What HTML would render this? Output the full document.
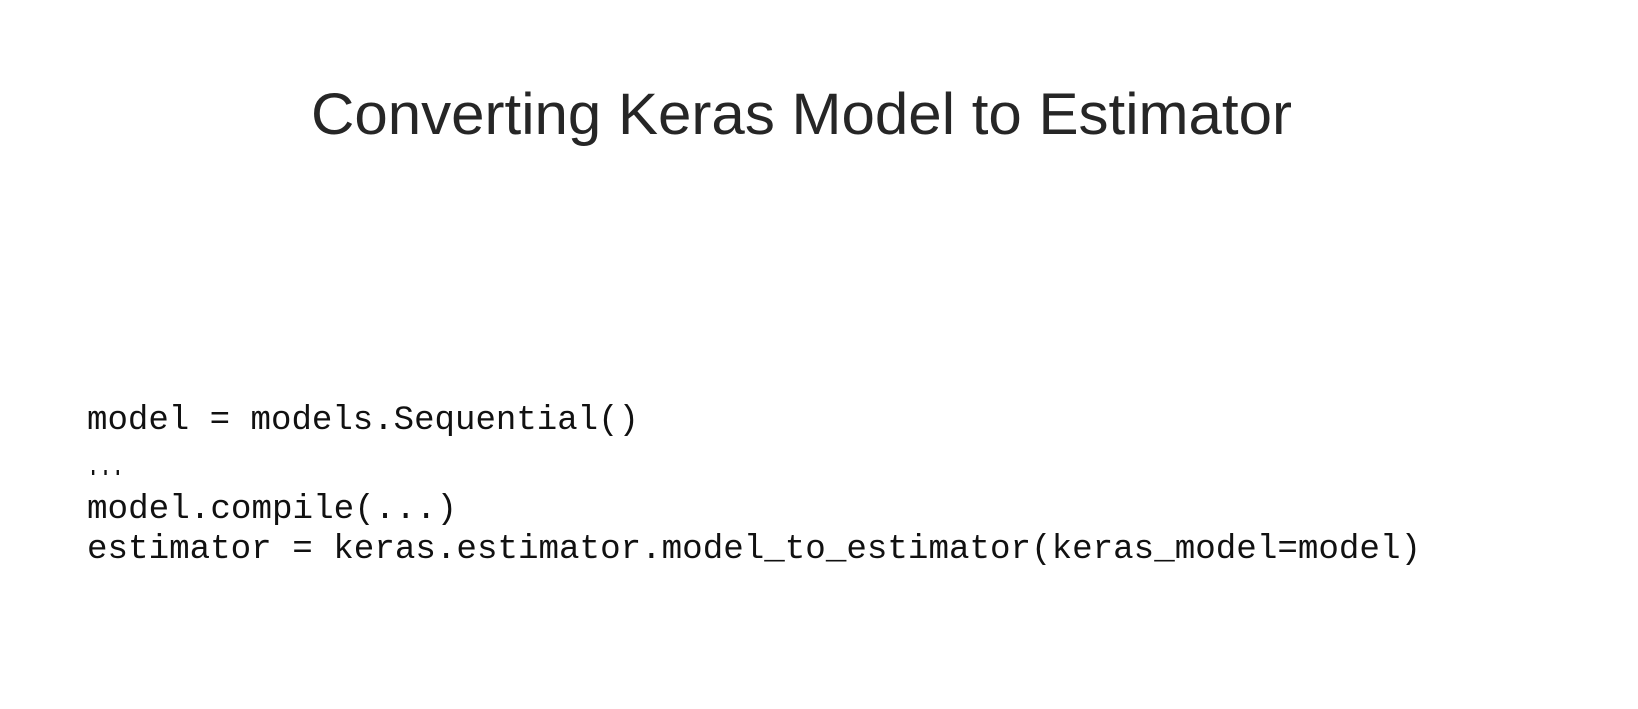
<!DOCTYPE html>
<html><head><meta charset="utf-8"><style>
html,body{margin:0;padding:0;background:#fff;width:1638px;height:709px;overflow:hidden}
svg{display:block}
</style></head><body>
<svg width="1638" height="709" viewBox="0 0 1638 709" xmlns="http://www.w3.org/2000/svg">
<rect width="1638" height="709" fill="#fff"/>
<text x="311" y="134" font-family="Liberation Sans, sans-serif" font-size="58" fill="#262626" textLength="981" lengthAdjust="spacingAndGlyphs">Converting Keras Model to Estimator</text>
<g font-family="Liberation Mono, monospace" font-size="34" fill="#111">
<text x="87" y="429" textLength="552" lengthAdjust="spacingAndGlyphs">model = models.Sequential()</text>
<text x="87" y="475" textLength="37" lengthAdjust="spacingAndGlyphs">...</text>
<text x="87" y="518" textLength="370" lengthAdjust="spacingAndGlyphs">model.compile(...)</text>
<text x="87" y="558" textLength="1334" lengthAdjust="spacingAndGlyphs">estimator = keras.estimator.model_to_estimator(keras_model=model)</text>
</g>
</svg>
</body></html>
